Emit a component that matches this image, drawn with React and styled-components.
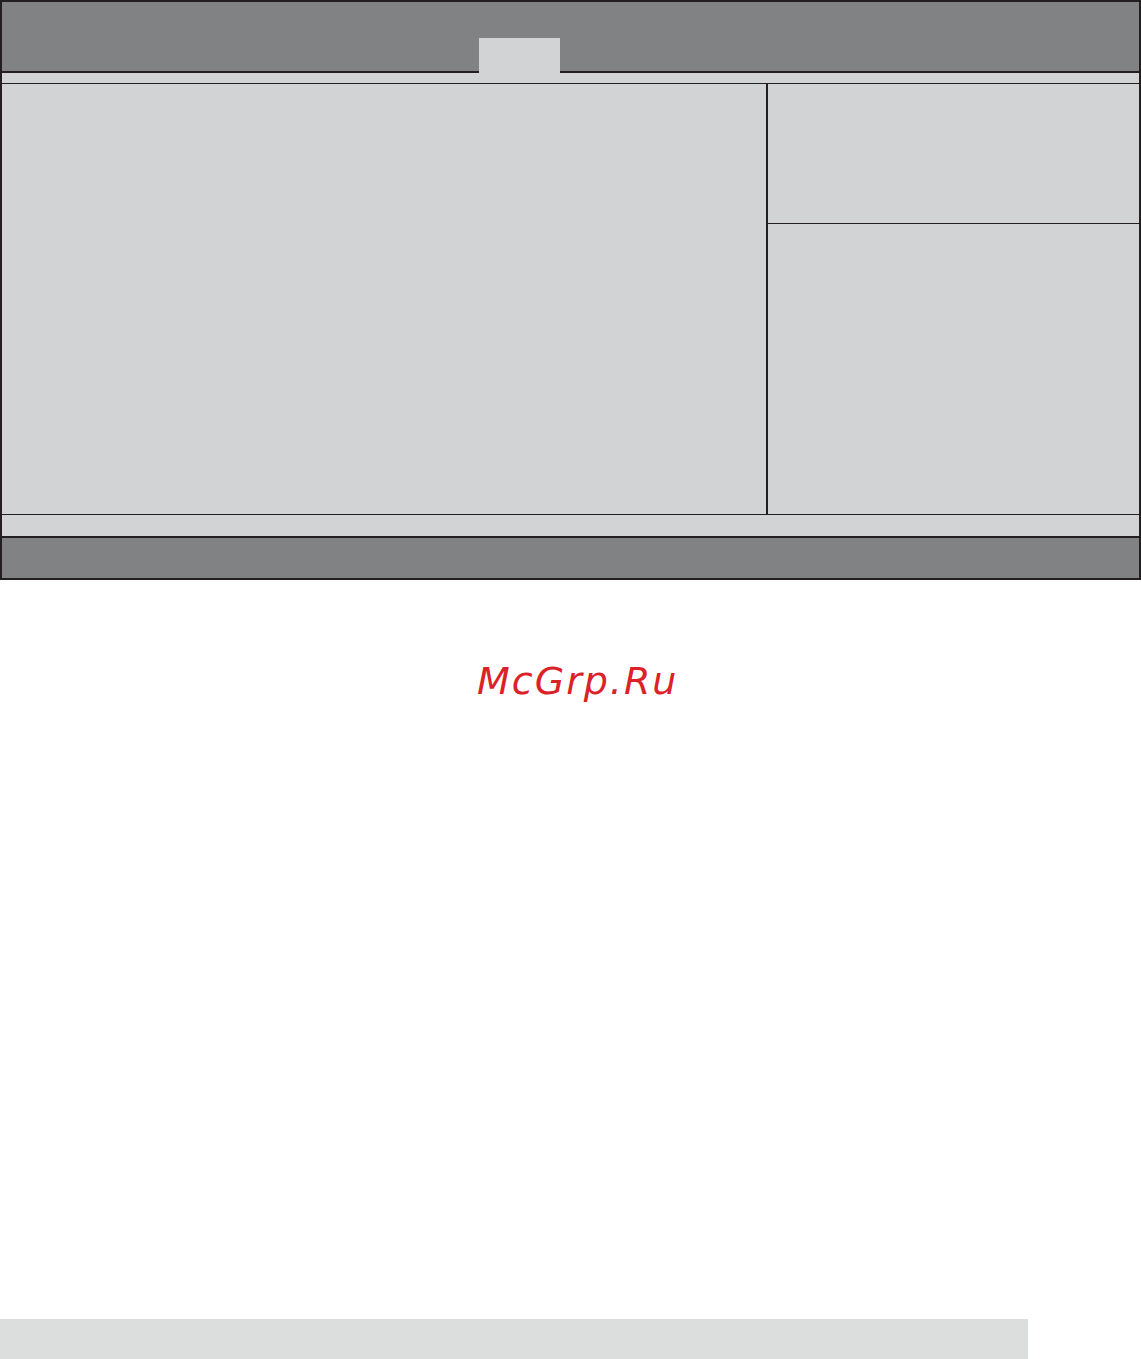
import React from 'react';
import styled, { createGlobalStyle } from 'styled-components';

const GlobalStyle = createGlobalStyle`
  html, body {
    margin: 0;
    padding: 0;
    background: #ffffff;
  }
  * {
    box-sizing: border-box;
  }
`

const Page = styled.div`
  width: 1141px;
  min-height: 1359px;
  display: flex;
  flex-direction: column;
  font-family: "DejaVu Sans", "Liberation Sans", sans-serif;
`

const Frame = styled.div`
  width: 1141px;
  border: 2px solid #231f20;
  display: flex;
  flex-direction: column;
  background: #d2d3d5;
`

const Header = styled.div`
  height: 71px;
  background: #818284;
  border-bottom: 2px solid #231f20;
  display: flex;
  align-items: flex-end;
  padding-left: 477px;
`

const Tab = styled.div`
  width: 81px;
  height: 35px;
  margin-bottom: -2px;
  background: #d2d3d5;
`

const Band = styled.div`
  height: ${p => p.$h}px;
  background: #d2d3d5;
  border-top: ${p => p.$top || 0}px solid #231f20;
  border-bottom: ${p => p.$line}px solid #231f20;
`

const Body = styled.div`
  height: 430px;
  display: flex;
`

const MainPanel = styled.div`
  width: 764px;
  background: #d2d3d5;
`

const Divider = styled.div`
  width: 2px;
  background: #231f20;
`

const SidePanel = styled.div`
  flex: 1;
  display: flex;
  flex-direction: column;
`

const HelpTop = styled.div`
  height: 140px;
  border-bottom: 1px solid #231f20;
  margin-left: -1px;
`

const HelpBottom = styled.div`
  flex: 1;
`

const Footer = styled.div`
  height: 40px;
  background: #818284;
`

const Watermark = styled.div`
  padding-top: 79px;
  padding-left: 477px;
  font-size: 38px;
  line-height: 44px;
  font-style: italic;
  letter-spacing: 2px;
  color: #dc2228;
`

const BottomBar = styled.div`
  margin-top: auto;
  width: 1028px;
  height: 40px;
  background: #dcdddd;
`

export default function App() {
  return (
    <>
      <GlobalStyle />
      <Page>
        <Frame>
          <Header>
            <Tab />
          </Header>
          <Band $h={11} $line={1} />
          <Body>
            <MainPanel />
            <Divider />
            <SidePanel>
              <HelpTop />
              <HelpBottom />
            </SidePanel>
          </Body>
          <Band $h={24} $top={1} $line={2} />
          <Footer />
        </Frame>
        <Watermark>McGrp.Ru</Watermark>
        <BottomBar />
      </Page>
    </>
  )
}
